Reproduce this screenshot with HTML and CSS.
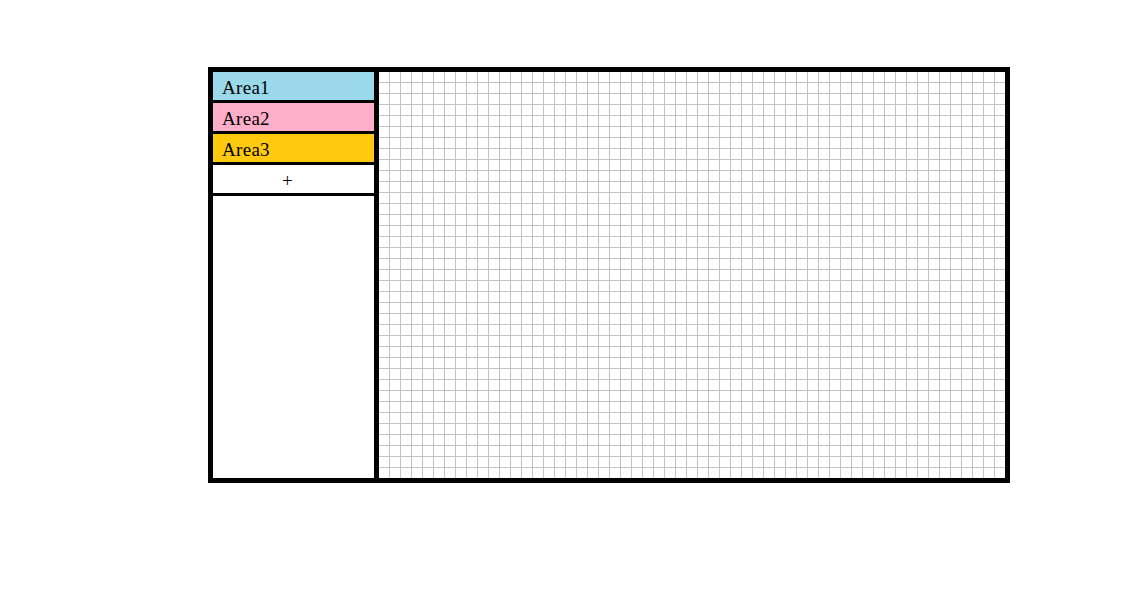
FILE: index.html
```html
<!DOCTYPE html>
<html>
<head>
<meta charset="utf-8">
<link rel="stylesheet" href="styles.css">
</head>
<body>
<div class="page">
  <div class="board">
    <div class="sidebar">
      <div class="area area-blue">Area1</div>
      <div class="area area-pink">Area2</div>
      <div class="area area-gold">Area3</div>
      <div class="area area-add">+</div>
    </div>
    <div class="grid"></div>
  </div>
</div>
</body>
</html>
```
FILE: styles.css
```css
html, body {
  margin: 0;
  padding: 0;
  background: #ffffff;
}
.page {
  padding: 67px 0 0 208px;
}
.board {
  display: flex;
  width: 792px;
  height: 406px;
  border: 5px solid #000000;
}
.sidebar {
  width: 161px;
  border-right: 5px solid #000000;
  display: flex;
  flex-direction: column;
  background: #ffffff;
}
.area {
  height: 28px;
  line-height: 32px;
  overflow: hidden;
  border-bottom: 3px solid #000000;
  padding-left: 9px;
  font-family: "Liberation Serif", "Times New Roman", serif;
  font-size: 19px;
  letter-spacing: 0.3px;
  color: #000000;
}
.area-blue { background: #99d9ea; }
.area-pink { background: #ffaec9; }
.area-gold { background: #ffc90e; }
.area-add {
  background: #ffffff;
  text-align: center;
  padding-left: 0;
  padding-right: 12px;
}
.grid {
  flex: 1;
  background-color: #ffffff;
  background-image:
    linear-gradient(to right, transparent 10px, #c3c3c3 10px, #c3c3c3 11px),
    linear-gradient(to bottom, transparent 10px, #c3c3c3 10px, #c3c3c3 11px);
  background-size: 11px 11px;
}
```
